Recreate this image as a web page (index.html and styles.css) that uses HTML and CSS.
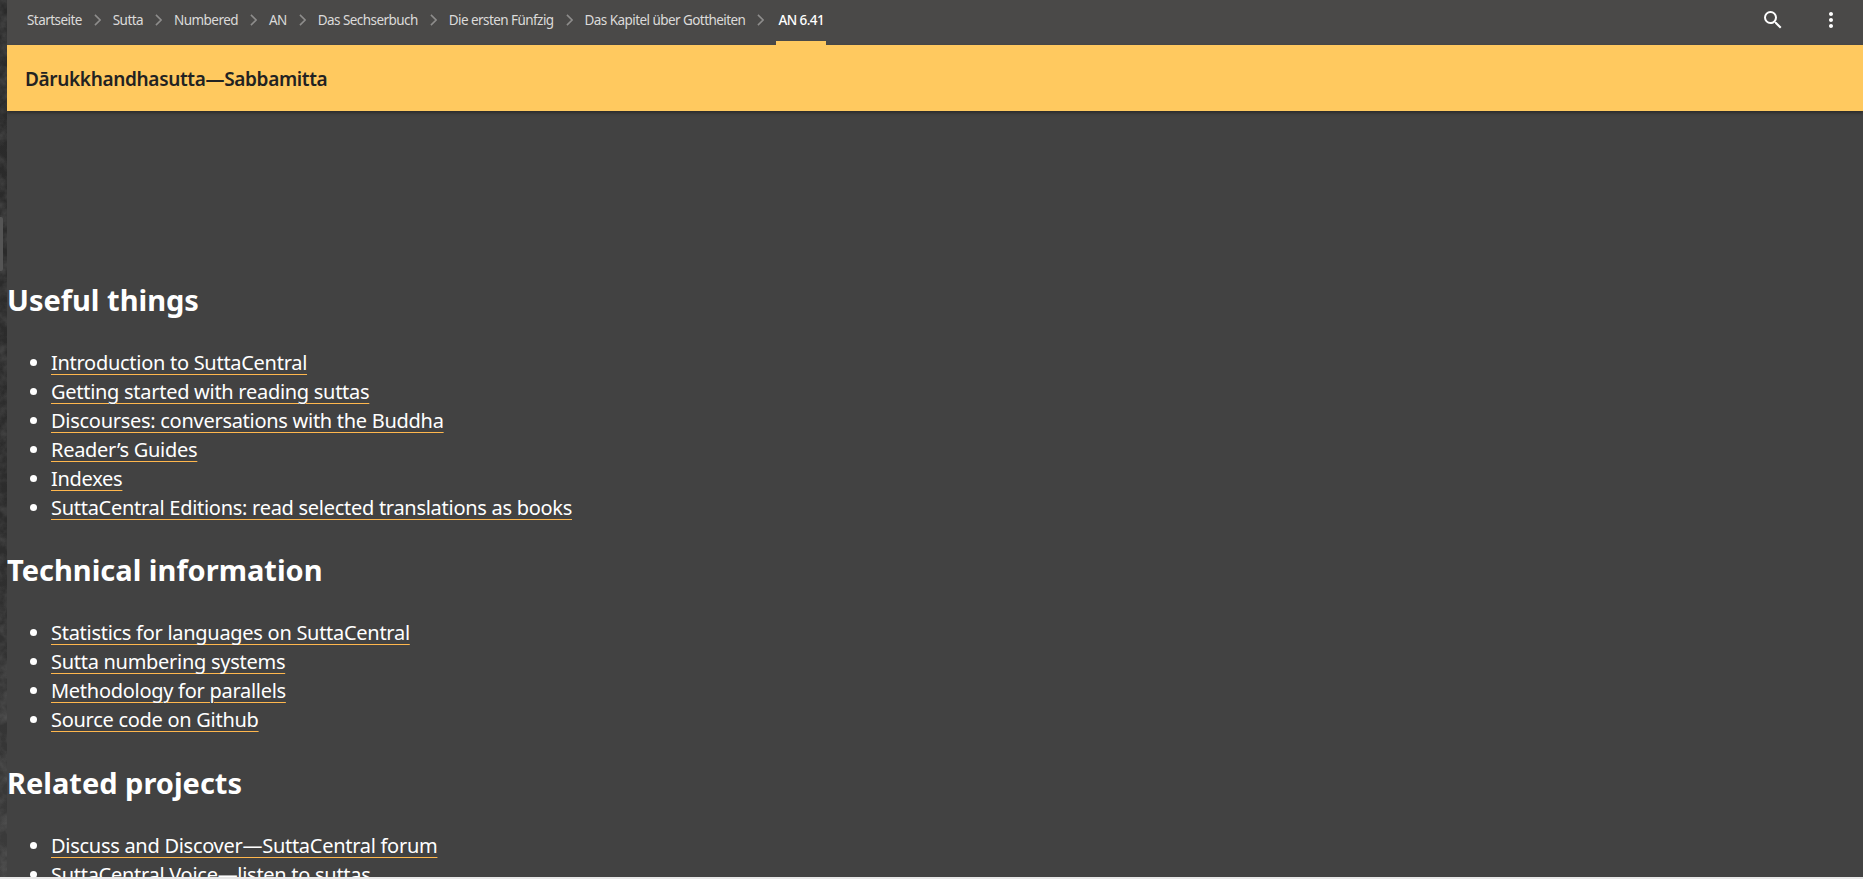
FILE: index.html
```html
<!DOCTYPE html>
<html lang="de">
<head>
<meta charset="utf-8">
<title>AN 6.41</title>
<link rel="stylesheet" href="styles.css">
</head>
<body>
<div class="backdrop">
  <svg class="backdrop-noise" width="7" height="879">
    <filter id="grain" x="0" y="0" width="100%" height="100%">
      <feTurbulence type="fractalNoise" baseFrequency="0.09" numOctaves="4" seed="7"/>
      <feColorMatrix type="matrix" values="0 0 0 0 1  0 0 0 0 1  0 0 0 0 1  0.9 0 0 0 -0.3"/>
    </filter>
    <rect width="7" height="879" filter="url(#grain)" opacity=".25"/>
  </svg>
  <div class="backdrop-tab"></div>
</div>
<div class="page">
  <header class="topbar">
    <nav class="crumbs">
      <a class="crumb">Startseite</a>
      <svg class="chev" viewBox="0 0 8 14"><path d="M1 1l6 6-6 6"/></svg>
      <a class="crumb">Sutta</a>
      <svg class="chev" viewBox="0 0 8 14"><path d="M1 1l6 6-6 6"/></svg>
      <a class="crumb">Numbered</a>
      <svg class="chev" viewBox="0 0 8 14"><path d="M1 1l6 6-6 6"/></svg>
      <a class="crumb">AN</a>
      <svg class="chev" viewBox="0 0 8 14"><path d="M1 1l6 6-6 6"/></svg>
      <a class="crumb">Das Sechserbuch</a>
      <svg class="chev" viewBox="0 0 8 14"><path d="M1 1l6 6-6 6"/></svg>
      <a class="crumb">Die ersten Fünfzig</a>
      <svg class="chev" viewBox="0 0 8 14"><path d="M1 1l6 6-6 6"/></svg>
      <a class="crumb">Das Kapitel über Gottheiten</a>
      <svg class="chev" viewBox="0 0 8 14"><path d="M1 1l6 6-6 6"/></svg>
      <a class="crumb current">AN 6.41</a>
    </nav>
    <div class="actions">
      <svg class="icon" viewBox="0 0 24 24"><path d="M15.5 14h-.79l-.28-.27A6.47 6.47 0 0 0 16 9.5 6.5 6.5 0 1 0 9.5 16c1.61 0 3.09-.59 4.23-1.57l.27.28v.79l5 4.99L20.49 19l-4.99-5zm-6 0C7.01 14 5 11.99 5 9.5S7.01 5 9.5 5 14 7.01 14 9.5 11.99 14 9.5 14z"/></svg>
      <svg class="icon" viewBox="0 0 24 24"><path d="M12 8c1.1 0 2-.9 2-2s-.9-2-2-2-2 .9-2 2 .9 2 2 2zm0 2c-1.1 0-2 .9-2 2s.9 2 2 2 2-.9 2-2-.9-2-2-2zm0 6c-1.1 0-2 .9-2 2s.9 2 2 2 2-.9 2-2-.9-2-2-2z"/></svg>
    </div>
  </header>
  <div class="titlebar"><h1 class="title">Dārukkhandhasutta—Sabbamitta</h1></div>
  <main class="content">
    <h2 class="heading">Useful things</h2>
    <ul class="links">
      <li><a>Introduction to SuttaCentral</a></li>
      <li><a>Getting started with reading suttas</a></li>
      <li><a>Discourses: conversations with the Buddha</a></li>
      <li><a>Reader’s Guides</a></li>
      <li><a>Indexes</a></li>
      <li><a>SuttaCentral Editions: read selected translations as books</a></li>
    </ul>
    <h2 class="heading">Technical information</h2>
    <ul class="links">
      <li><a>Statistics for languages on SuttaCentral</a></li>
      <li><a>Sutta numbering systems</a></li>
      <li><a>Methodology for parallels</a></li>
      <li><a>Source code on Github</a></li>
    </ul>
    <h2 class="heading">Related projects</h2>
    <ul class="links">
      <li><a>Discuss and Discover—SuttaCentral forum</a></li>
      <li><a>SuttaCentral Voice—listen to suttas</a></li>
    </ul>
  </main>
</div>
<div class="bottom-edge"></div>
</body>
</html>
```

FILE: styles.css
```css
* { box-sizing: border-box; }
html, body { margin: 0; height: 879px; overflow: hidden; }
body {
  font-family: "Noto Sans", "Open Sans", sans-serif;
  background: #2b2b2b;
  color: #fff;
}
.backdrop {
  position: fixed; left: 0; top: 0; bottom: 0; width: 7px;
  background: linear-gradient(180deg, #2a2a2a 0, #2c2c2c 60%, #3c3c3c 100%);
}
.backdrop-noise { display: block; }
.backdrop-tab {
  position: absolute; left: 0; top: 217px; width: 3px; height: 54px;
  background: #555; border-radius: 0 2px 2px 0;
}
.page {
  margin-left: 7px; height: 879px;
  background: #424242;
  display: flex; flex-direction: column;
}
.topbar {
  height: 45px; flex: none;
  background: #4a4948;
  display: flex; align-items: center; justify-content: space-between;
  padding: 0 20px 5px 20px;
}
.crumbs { display: flex; align-items: center; height: 40px; }
.crumb {
  font-size: 13.5px; letter-spacing: -.56px; color: #dcdbda; white-space: nowrap;
}
.crumb.current {
  color: #fff; height: 45px; line-height: 40px; padding: 0 2px;
  border-bottom: 4px solid #ffc95f; font-weight: 500;
  position: relative; top: 2.5px;
}
.chev { width: 7px; height: 12px; margin: 0 12px; fill: none; stroke: #8e8d8c; stroke-width: 1.8; flex: none; }
.actions { display: flex; gap: 34px; align-items: center; }
.icon { width: 24px; height: 24px; fill: #fff; display: block; }
.titlebar {
  height: 66px; flex: none; background: #ffc95f;
  display: flex; align-items: center; padding: 1px 0 0 18px;
  box-shadow: 0 2px 3px rgba(0,0,0,.35);
}
.title { margin: 0; font-size: 19px; font-weight: 600; letter-spacing: -.34px; color: #222; white-space: nowrap; }
.content { padding-top: 168px; }
.heading { margin: 0; font-size: 29px; line-height: 42px; font-weight: 700; color: #fff; }
.links { margin: 28px 0 27px; padding: 0 0 0 44px; font-size: 20px; letter-spacing: -.28px; line-height: 28.9px; }
.links a {
  color: #fff;
  text-decoration: underline; text-decoration-color: #ffb74d;
  text-decoration-thickness: 1px; text-underline-offset: 4px;
}
.bottom-edge { position: fixed; left: 0; right: 0; bottom: 0; height: 2px; background: #e8e8e8; }
```
